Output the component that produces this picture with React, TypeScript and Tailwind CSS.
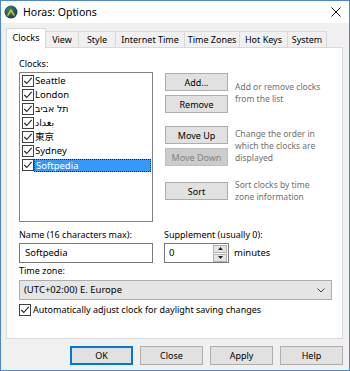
import React from "react";

const font = { fontFamily: '"Noto Sans", "DejaVu Sans", "Noto Sans CJK JP", sans-serif' };

function Check({ size = 13 }: { size?: number }) {
  return (
    <svg width={size} height={size} viewBox="0 0 13 13" className="shrink-0">
      <rect x="0.5" y="0.5" width="12" height="12" fill="#fff" stroke="#333" />
      <path d="M2.5 6.5 L5.2 9.2 L10.5 3.2" fill="none" stroke="#222" strokeWidth="1.2" />
    </svg>
  );
}

function Btn({ children, disabled, primary, className = "" }: { children: React.ReactNode; disabled?: boolean; primary?: boolean; className?: string }) {
  const base = "flex items-center justify-center text-[9px] leading-none";
  const look = disabled
    ? "bg-[#cccccc] border border-[#bfbfbf] text-[#838383]"
    : primary
    ? "bg-[#e1e1e1] border-2 border-[#0078d7] text-black"
    : "bg-[#e1e1e1] border border-[#adadad] text-black";
  return <div className={`${base} ${look} ${className}`}>{children}</div>;
}

function Desc({ lines }: { lines: string[] }) {
  return (
    <div className="flex flex-col text-[#707070] text-[8.5px]">
      {lines.map((l, i) => (
        <div key={i} className="h-[12px] leading-[12px] whitespace-nowrap">{l}</div>
      ))}
    </div>
  );
}

const clocks = ["Seattle", "London", "תל אביב", "بغداد", "東京", "Sydney", "Softpedia"];

export default function App() {
  return (
    <div style={font} className="w-[350px] h-[371px] border border-[#4f86cf] bg-[#f0f0f0] flex flex-col overflow-hidden text-black">
      {/* title bar */}
      <div className="h-[22px] bg-white flex items-center shrink-0">
        <svg width="14" height="14" viewBox="0 0 14 14" className="ml-[3px]">
          <defs>
            <radialGradient id="g" cx="0.4" cy="0.35" r="0.7">
              <stop offset="0" stopColor="#3b8a6a" />
              <stop offset="1" stopColor="#123a5a" />
            </radialGradient>
          </defs>
          <circle cx="7" cy="7" r="6.5" fill="url(#g)" />
          <path d="M2.8 10.5 L7 4 L11.2 10.5 L9.4 10.5 L7 6.8 L4.6 10.5 Z" fill="#f2c81c" />
        </svg>
        <span className="ml-[5px] text-[10.5px] leading-none">Horas: Options</span>
        <div className="flex-1" />
        <svg width="10" height="10" viewBox="0 0 10 10" className="mr-[8px]">
          <path d="M0.5 0.5 L9.5 9.5 M9.5 0.5 L0.5 9.5" stroke="#111" strokeWidth="1" />
        </svg>
      </div>

      {/* body */}
      <div className="flex flex-col pt-[5px] pl-[5px] pr-[6px]">
        {/* tabs */}
        <div className="flex items-end h-[19px] text-[9px] leading-none">
          <div className="relative z-10 -mb-px h-[20px] w-[40px] bg-white border border-b-0 border-[#d9d9d9] flex items-center justify-center pb-[2px]">Clocks</div>
          <div className="h-[16px] w-[33px] bg-[#f0f0f0] border border-l-0 border-b-0 border-[#d9d9d9] flex items-center justify-center">View</div>
          <div className="h-[16px] w-[37px] bg-[#f0f0f0] border border-l-0 border-b-0 border-[#d9d9d9] flex items-center justify-center">Style</div>
          <div className="h-[16px] w-[69px] bg-[#f0f0f0] border border-l-0 border-b-0 border-[#d9d9d9] flex items-center justify-center">Internet Time</div>
          <div className="h-[16px] w-[55px] bg-[#f0f0f0] border border-l-0 border-b-0 border-[#d9d9d9] flex items-center justify-center">Time Zones</div>
          <div className="h-[16px] w-[48px] bg-[#f0f0f0] border border-l-0 border-b-0 border-[#d9d9d9] flex items-center justify-center">Hot Keys</div>
          <div className="h-[16px] w-[39px] bg-[#f0f0f0] border border-l-0 border-b-0 border-[#d9d9d9] flex items-center justify-center">System</div>
        </div>

        {/* panel */}
        <div className="h-[292px] bg-white border border-[#d9d9d9] pt-[9px] pl-[12px] pr-[9px] flex flex-col text-[9px]">
          <div className="h-[14px] leading-[14px]">Clocks:</div>
          <div className="flex mt-[1px] gap-[12px]">
            {/* list */}
            <div className="w-[134px] h-[150px] border border-[#828282] bg-white pt-[1px] pl-[1px] pr-[1px] flex flex-col">
              {clocks.map((c, i) => (
                <div key={i} className="h-[14px] flex items-center">
                  <div className="w-[13px] flex items-center justify-center"><Check size={12} /></div>
                  <span
                    className={
                      i === 6
                        ? "flex-1 h-[13px] bg-[#3399ff] text-white border border-dotted border-[#0a2a66] leading-[11px] pl-[1px] text-[9.5px]"
                        : "pl-[1px] text-[9.5px] leading-none"
                    }
                  >
                    {c}
                  </span>
                </div>
              ))}
            </div>
            {/* buttons */}
            <div className="flex flex-col pt-[1px]">
              <div className="flex items-center gap-[7px]">
                <div className="flex flex-col gap-[4px]">
                  <Btn className="w-[63px] h-[18px]">Add...</Btn>
                  <Btn className="w-[63px] h-[18px]">Remove</Btn>
                </div>
                <Desc lines={["Add or remove clocks", "from the list"]} />
              </div>
              <div className="flex items-center gap-[7px] mt-[13px]">
                <div className="flex flex-col gap-[4px]">
                  <Btn className="w-[63px] h-[18px]">Move Up</Btn>
                  <Btn disabled className="w-[63px] h-[18px]">Move Down</Btn>
                </div>
                <Desc lines={["Change the order in", "which the clocks are", "displayed"]} />
              </div>
              <div className="flex items-center gap-[7px] mt-[13px]">
                <Btn className="w-[63px] h-[18px]">Sort</Btn>
                <Desc lines={["Sort clocks by time", "zone information"]} />
              </div>
            </div>
          </div>

          {/* name / supplement */}
          <div className="flex mt-[6px] gap-[11px]">
            <div className="w-[134px] flex flex-col">
              <div className="h-[14px] leading-[14px]">Name (16 characters max):</div>
              <div className="mt-[1px] h-[20px] border border-[#7a7a7a] bg-white flex items-center pl-[5px] text-[9.5px]">Softpedia</div>
            </div>
            <div className="flex flex-col">
              <div className="h-[14px] leading-[14px]">Supplement (usually 0):</div>
              <div className="mt-[1px] flex items-center">
                <div className="w-[65px] h-[20px] border border-[#7a7a7a] bg-white flex items-center pl-[4px] pr-[1px]">
                  <span className="flex-1 text-[9.5px]">0</span>
                  <div className="flex flex-col gap-[1px]">
                    <div className="w-[14px] h-[8px] bg-[#e5e5e5] border border-[#b0b0b0] flex items-center justify-center">
                      <svg width="5" height="3" viewBox="0 0 5 3"><path d="M0 3 L2.5 0 L5 3 Z" fill="#222" /></svg>
                    </div>
                    <div className="w-[14px] h-[8px] bg-[#e5e5e5] border border-[#b0b0b0] flex items-center justify-center">
                      <svg width="5" height="3" viewBox="0 0 5 3"><path d="M0 0 L2.5 3 L5 0 Z" fill="#222" /></svg>
                    </div>
                  </div>
                </div>
                <span className="ml-[5px] text-[9.5px]">minutes</span>
              </div>
            </div>
          </div>

          <div className="h-[14px] leading-[14px] mt-[1px]">Time zone:</div>
          <div className="mt-[2px] w-[313px] h-[20px] bg-[#e5e5e5] border border-[#adadad] flex items-center pl-[4px] pr-[6px]">
            <span className="flex-1 text-[9.5px]">(UTC+02:00) E. Europe</span>
            <svg width="8" height="5" viewBox="0 0 8 5"><path d="M0.5 0.5 L4 4 L7.5 0.5" fill="none" stroke="#444" strokeWidth="1" /></svg>
          </div>
          <div className="mt-[3px] flex items-center gap-[2px]">
            <Check size={12} />
            <span className="text-[9px]">Automatically adjust clock for daylight saving changes</span>
          </div>
        </div>

        {/* bottom buttons */}
        <div className="mt-[7px] flex justify-end gap-[7px]">
          <Btn primary className="w-[63px] h-[19px]">OK</Btn>
          <Btn className="w-[63px] h-[19px]">Close</Btn>
          <Btn className="w-[63px] h-[19px]">Apply</Btn>
          <Btn className="w-[63px] h-[19px]">Help</Btn>
        </div>
      </div>
    </div>
  );
}
